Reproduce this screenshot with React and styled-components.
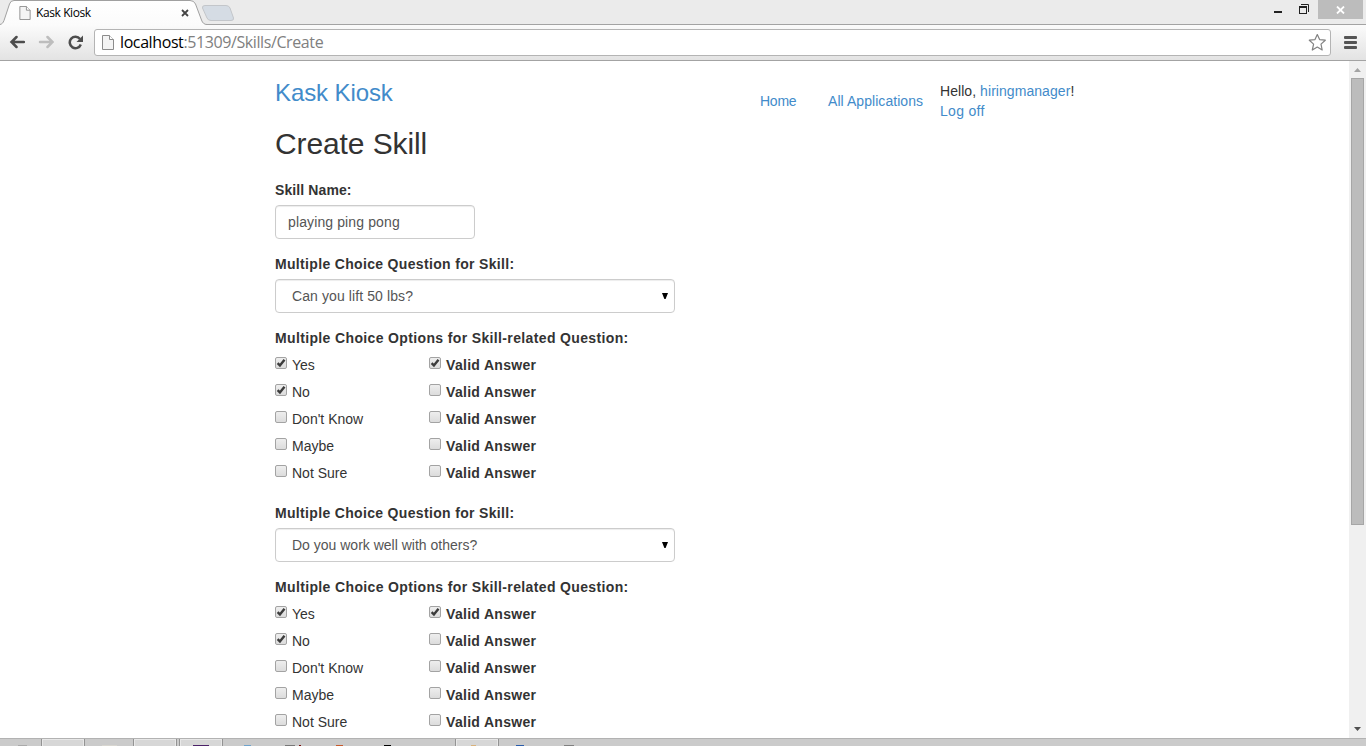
import React from 'react';
import styled, { createGlobalStyle } from 'styled-components';

const Global = createGlobalStyle`
  *, *::before, *::after { box-sizing: border-box; }
  body { margin: 0; background: #fff; overflow: hidden; }
`;

const Screen = styled.div`
  width: 1366px;
  height: 746px;
  display: flex;
  flex-direction: column;
  overflow: hidden;
  font: 14px/20px "Liberation Sans", Arial, sans-serif;
  color: #333;
`;

/* Browser window */
const TabStrip = styled.div`
  height: 25px;
  flex: none;
  display: flex;
  background: linear-gradient(#ebebeb 0 24px, #a3a3a3 24px);
`;
const Tab = styled.div`
  position: relative;
  width: 207px;
  height: 25px;
  padding: 1px 0 0 19px;
  display: flex;
  align-items: center;
  font: 12px/16px "Open Sans", "Noto Sans", sans-serif;
  color: #000;
`;
const TabShape = styled.svg`
  position: absolute;
  left: 0;
  top: 0;
`;
const TabTitle = styled.span`
  position: relative;
  width: 150px;
  padding-left: 5px;
  letter-spacing: -0.4px;
`;
const Glyph = styled.svg`
  position: relative;
  flex: none;
  display: block;
`;
const WindowButtons = styled.div`
  margin: 0 3px 0 auto;
  display: flex;
  height: 19px;
`;
const Minimize = styled.div`
  width: 8px;
  height: 2px;
  margin: 11px 17px 0 0;
  background: #222;
`;
const CloseButton = styled.div`
  width: 45px;
  height: 19px;
  margin-left: 9px;
  display: flex;
  align-items: center;
  justify-content: center;
  background: #bcbcbc;
`;
const Toolbar = styled.div`
  height: 36px;
  flex: none;
  display: flex;
  align-items: center;
  padding: 0 8px 1px 9px;
  background: linear-gradient(#fbfbfb, #e3e3e3);
  border-bottom: 1px solid #a3a3a3;
`;
const NavButtons = styled.div`
  display: flex;
  gap: 13px;
  width: 85px;
`;
const AddressBar = styled.div`
  width: 1237px;
  height: 27px;
  display: flex;
  align-items: center;
  padding: 0 4px 0 7px;
  border: 1px solid #b4b4b4;
  border-radius: 3px;
  background: #fff;
`;
const Url = styled.span`
  flex: 1;
  padding-left: 6px;
  font: 16px/22px "Open Sans", "Noto Sans", sans-serif;
  letter-spacing: -0.4px;
  color: #808080;
`;
const Host = styled.span`color: #000;`;
const MenuIcon = styled.div`
  margin-left: 13px;
  width: 13px;
  display: grid;
  gap: 2px;
`;
const MenuBar = styled.div`
  height: 3px;
  border-radius: 1px;
  background: #555;
`;

const Viewport = styled.div`
  height: 677px;
  flex: none;
  display: flex;
  overflow: hidden;
`;
const Page = styled.main`
  flex: 1;
  padding-left: 275px;
`;
const Scrollbar = styled.div`
  width: 17px;
  display: flex;
  flex-direction: column;
  align-items: center;
  background: #f0f0f0;
`;
const ScrollArrow = styled.svg`
  display: block;
  flex: none;
`;
const Thumb = styled.div`
  width: 13px;
  height: 447px;
  margin-bottom: auto;
  background: #bcbcbc;
  border: 1px solid #a6a6a6;
`;

/* Page content */
const Header = styled.header`
  display: flex;
  height: 60px;
  padding-top: 18px;
`;
const Brand = styled.a`
  width: 485px;
  font-size: 24px;
  line-height: 28px;
  letter-spacing: -0.1px;
  color: #428bca;
`;
const NavLink = styled.a`
  width: ${p => p.$w}px;
  padding-top: 12px;
  color: #428bca;
  letter-spacing: ${p => p.$ls || 0}px;
`;
const Account = styled.div`
  padding-top: 2px;
  letter-spacing: 0.06px;
`;
const Link = styled.a`
  color: #428bca;
  letter-spacing: ${p => p.$ls || 0.06}px;
`;
const Title = styled.h1`
  margin: 6px 0 20px;
  font-size: 30px;
  line-height: 33px;
  font-weight: 400;
  letter-spacing: -0.1px;
`;
const Label = styled.label`
  display: block;
  margin-bottom: 5px;
  font-weight: 700;
  letter-spacing: ${p => p.$ls}px;
`;
const Field = styled.div`
  display: flex;
  align-items: center;
  width: ${p => p.$w}px;
  height: 34px;
  margin-bottom: 15px;
  padding: 0 6px 0 ${p => p.$pad}px;
  border: 1px solid #ccc;
  border-radius: 4px;
  box-shadow: inset 0 1px 1px rgba(0, 0, 0, 0.075);
  color: #555;
  letter-spacing: ${p => p.$ls || 0}px;
`;
const FieldText = styled.span`flex: 1;`;
const Options = styled.div`
  margin: -1px 0 16px;
`;
const OptionRow = styled.div`
  height: 27px;
  display: flex;
`;
const Option = styled.div`
  width: ${p => p.$w}px;
  display: flex;
  gap: 5px;
  line-height: 27px;
  font-weight: ${p => (p.$bold ? 700 : 400)};
  letter-spacing: ${p => (p.$bold ? 0.31 : 0)}px;
`;
const Box = styled.div`
  width: 12px;
  height: 12px;
  margin-top: 5px;
  border: 1px solid #a3a3a3;
  border-radius: 2px;
  background: linear-gradient(#eee, #dcdcdc);
`;

/* Taskbar */
const Taskbar = styled.div`
  height: 8px;
  flex: none;
  display: flex;
  gap: 2px;
  overflow: hidden;
  background: #cbcbcb;
  border-top: 1px solid #b2b2b2;
`;
const Slot = styled.div`
  flex: none;
  width: ${p => p.$w || 44}px;
  height: 12px;
  margin-top: -1px;
  display: flex;
  justify-content: center;
  padding-top: ${p => (p.$open ? 6 : 7)}px;
  border: ${p => (p.$open ? '1px solid #939393' : '0')};
  background: ${p => (p.$open ? '#d7d7d7' : 'transparent')};
  box-shadow: ${p => (p.$open ? 'inset 0 0 0 1px #e8e8e8' : 'none')};
`;
const IconTop = styled.div`
  width: ${p => p.$w}px;
  height: 1px;
  margin-left: ${p => p.$shift || 0}px;
  background: ${p => p.$c};
`;

const slots = [
  { w: 39, shift: 6, iw: 9, c: '#aaa' },
  { open: true },
  { iw: 15, c: '#d8d6d0' },
  { open: true },
  { open: true, iw: 16, c: '#4b2168' },
  { iw: 7, c: '#6fa3cc' },
  { iw: 16, c: 'linear-gradient(90deg, #777 0 10px, transparent 10px 14px, #7a0d0d 14px)' },
  { iw: 7, c: '#c85a2c' },
  { shift: 5, iw: 7, c: '#000' },
  {},
  { open: true, shift: -8, iw: 5, c: '#d9b27c' },
  { shift: -6, iw: 8, c: '#2a5caa' },
  { iw: 10, c: '#808080' },
];

const FileIcon = ({ w, h }) => (
  <Glyph width={w} height={h} viewBox="0 0 12 15">
    <path d="M.5 .5H7.5L11.5 4.5V14.5H.5Z" fill="#f4f4f4" stroke="#8c8c8c" />
    <path d="M7.5 .5V4.5H11.5" fill="#fff" stroke="#8c8c8c" />
  </Glyph>
);

const Check = ({ on }) => (
  <Box>
    {on && (
      <Glyph width="10" height="10" viewBox="0 0 10 10">
        <path d="M1.600 5.200L3.900 7.400L8.500 1.800" fill="none" stroke="#3c3c3c" strokeWidth="2.4" />
      </Glyph>
    )}
  </Box>
);

const Question = ({ text, ls }) => (
  <>
    <Label $ls={0.33}>Multiple Choice Question for Skill:</Label>
    <Field $w={400} $pad={16} $ls={ls}>
      <FieldText>{text}</FieldText>
      <Glyph width="6" height="6"><path d="M0 0H6L3.600 6H2.400Z" fill="#000" /></Glyph>
    </Field>
    <Label $ls={0.36}>Multiple Choice Options for Skill-related Question:</Label>
    <Options>
      {['Yes', 'No', "Don't Know", 'Maybe', 'Not Sure'].map((name, i) => (
        <OptionRow key={name}>
          <Option $w={154}><Check on={i < 2} />{name}</Option>
          <Option $w={150} $bold><Check on={i === 0} />Valid Answer</Option>
        </OptionRow>
      ))}
    </Options>
  </>
);

export default function App() {
  return (
    <Screen>
      <Global />
      <TabStrip>
        <Tab>
          <TabShape width="240" height="25">
            <defs>
              <linearGradient id="tab" x1="0" y1="0" x2="0" y2="1">
                <stop offset="0" stopColor="#fff" /><stop offset="1" stopColor="#fbfbfb" />
              </linearGradient>
            </defs>
            <path d="M0 25V24.500C2 24 3 23 4 20.500L9.500 4Q10.500 .5 14 .5H190Q194 .5 195.500 4L201.500 20Q203 24.500 207 24.500V25Z" fill="url(#tab)" />
            <path d="M0 24.500C2 24 3 23 4 20.500L9.500 4Q10.500 .5 14 .5H190Q194 .5 195.500 4L201.500 20Q203 24.500 207 24.500" fill="none" stroke="#a0a0a0" />
            <path d="M205 5.500H226Q229 5.500 230 8L233.500 18Q234 20.500 231 20.500H211Q208 20.500 207 18L202.500 8Q202 5.500 205 5.500Z" fill="#d5dce4" stroke="#c3c6ca" />
          </TabShape>
          <FileIcon w={12} h={14} />
          <TabTitle>Kask Kiosk</TabTitle>
          <Glyph width="8" height="8"><path d="M1 1L7 7M7 1L1 7" stroke="#444" strokeWidth="1.8" /></Glyph>
        </Tab>
        <WindowButtons>
          <Minimize />
          <Glyph width="10" height="19">
            <path d="M0 6H8V14H0ZM1 8V13H7V8Z" fill="#222" fillRule="evenodd" />
            <path d="M2 4.500H9.500V12" fill="none" stroke="#222" />
          </Glyph>
          <CloseButton>
            <Glyph width="9" height="8"><path d="M1 .5L8 7.500M8 .5L1 7.500" stroke="#fff" strokeWidth="1.8" /></Glyph>
          </CloseButton>
        </WindowButtons>
      </TabStrip>
      <Toolbar>
        <NavButtons>
          <Glyph width="16" height="14"><path d="M2.500 7H15M7.500 2L2.500 7L7.500 12" fill="none" stroke="#4d4d4d" strokeWidth="2.5" strokeLinecap="round" /></Glyph>
          <Glyph width="16" height="14"><path d="M2 7H14.500M9.500 2L14.500 7L9.500 12" fill="none" stroke="#bdbdbd" strokeWidth="2.5" strokeLinecap="round" /></Glyph>
          <Glyph width="17" height="15">
            <path d="M13 4A5.700 5.700 0 1 0 13.800 9.500" fill="none" stroke="#4d4d4d" strokeWidth="2.5" />
            <path d="M16 .5V7H9.500Z" fill="#4d4d4d" />
          </Glyph>
        </NavButtons>
        <AddressBar>
          <FileIcon w={12} h={15} />
          <Url><Host>localhost</Host>:51309/Skills/Create</Url>
          <Glyph width="18" height="18">
            <path d="M9.300 1.500L11.600 6.600L17.300 7.200L13 11.100L14.200 17L9.300 14L4.300 17L5.600 11.100L1.300 7.200L7 6.600Z" fill="#fff" stroke="#828282" strokeWidth="1.2" strokeLinejoin="round" />
          </Glyph>
        </AddressBar>
        <MenuIcon><MenuBar /><MenuBar /><MenuBar /></MenuIcon>
      </Toolbar>
      <Viewport>
        <Page>
          <Header>
            <Brand>Kask Kiosk</Brand>
            <NavLink $w={68} $ls={-0.25}>Home</NavLink>
            <NavLink $w={112} $ls={0.06}>All Applications</NavLink>
            <Account>
              <div>Hello, <Link>hiringmanager</Link>!</div>
              <Link $ls={0.3}>Log off</Link>
            </Account>
          </Header>
          <Title>Create Skill</Title>
          <Label $ls={0.1}>Skill Name:</Label>
          <Field $w={200} $pad={12} $ls={0.12}><FieldText>playing ping pong</FieldText></Field>
          <Question text="Can you lift 50 lbs?" ls={0.1} />
          <Question text="Do you work well with others?" />
        </Page>
        <Scrollbar>
          <ScrollArrow width="17" height="17"><path d="M5 11H12L8.500 7Z" fill="#a3a3a3" /></ScrollArrow>
          <Thumb />
          <ScrollArrow width="17" height="17"><path d="M5 6H12L8.500 10Z" fill="#505050" /></ScrollArrow>
        </Scrollbar>
      </Viewport>
      <Taskbar>
        {slots.map((s, i) => (
          <Slot key={i} $w={s.w} $open={s.open}>
            {s.iw && <IconTop $w={s.iw} $c={s.c} $shift={s.shift} />}
          </Slot>
        ))}
      </Taskbar>
    </Screen>
  );
}
